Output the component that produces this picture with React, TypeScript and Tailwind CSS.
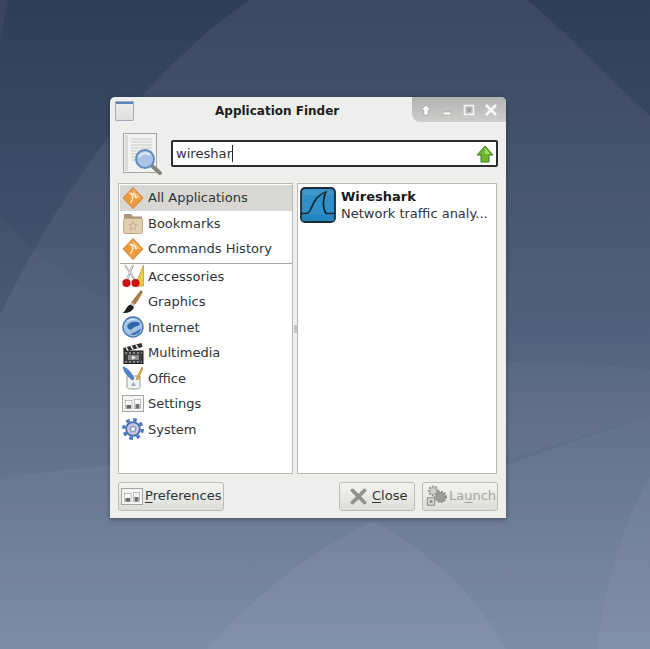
import type { ReactNode } from "react";

function Wallpaper() {
  return (
    <svg className="absolute inset-0" width="650" height="649" viewBox="0 0 650 649">
      <defs>
        <linearGradient id="bg" x1="0" y1="0" x2="0" y2="1">
          <stop offset="0" stopColor="#2f3e57" />
          <stop offset="0.5" stopColor="#465772" />
          <stop offset="1" stopColor="#6f819b" />
        </linearGradient>
      </defs>
      <rect width="650" height="649" fill="url(#bg)" />
      <path d="M250 0C160 60 70 170 0 315V649H650V116C610 80 570 35 527 0Z" fill="#fff" opacity="0.06" />
      <path d="M0 215C30 250 70 280 110 300V470L0 480Z" fill="#fff" opacity="0.02" />
      <path d="M0 0H8L0 40Z" fill="#fff" opacity="0.04" />
      <path d="M0 480C40 472 80 468 120 465H505L650 415V649H0Z" fill="#fff" opacity="0.045" />
      <path d="M500 362C550 362 600 364 650 370V415L505 460Z" fill="#fff" opacity="0.03" />
      <path d="M207 649C250 600 310 550 373 522C430 550 480 600 506 649Z" fill="#fff" opacity="0.05" />
      <path d="M597 649C605 580 625 520 650 477V649Z" fill="#fff" opacity="0.04" />
    </svg>
  );
}

function Diamond() {
  return (
    <svg width="22" height="24" viewBox="0 0 22 24">
      <path d="M11 1.500L21 12L11 22.500L1 12Z" fill="#ee9a3c" stroke="#d0812e" strokeLinejoin="round" />
      <path d="M11 3.500L19 12L11 12Z" fill="#f6bd74" />
      <path d="M8.500 17C11.500 13 11 9 8.500 7.500C12 7.500 14.500 9.500 14 12.500" fill="none" stroke="#fff4e4" strokeWidth="1.300" />
    </svg>
  );
}

function Folder() {
  return (
    <svg width="22" height="24" viewBox="0 0 22 24">
      <path d="M2 3H9L11 5.500H20V10H2Z" fill="#ab9678" />
      <rect x="1.500" y="7.500" width="19" height="15" rx="1" fill="#e2cfb0" stroke="#c0ac8c" />
      <path d="M11 10.500L12.400 13.500H15.200L13 15.500L13.800 18.500L11 16.800L8.200 18.500L9 15.500L6.800 13.500H9.600Z" fill="none" stroke="#c6b193" />
    </svg>
  );
}

function Scissors() {
  return (
    <svg width="22" height="24" viewBox="0 0 22 24">
      <path d="M21.500 1V22H13Z" fill="#edcb45" stroke="#b6972a" strokeWidth="0.700" />
      <path d="M3 1L13 16M11 1L5 16" stroke="#a9acb0" strokeWidth="2.200" fill="none" />
      <path d="M3.500 1L13 16M10.500 1L5 16" stroke="#e9eaea" strokeWidth="0.700" fill="none" />
      <circle cx="4.500" cy="19" r="3" fill="#cc1512" stroke="#cc1512" strokeWidth="2.200" />
      <circle cx="13.500" cy="19" r="3" fill="#cc1512" stroke="#cc1512" strokeWidth="2.200" />
    </svg>
  );
}

function Brush() {
  return (
    <svg width="22" height="24" viewBox="0 0 22 24">
      <path d="M18.500 1C20 0.500 20.500 1.500 20 3L13 14.500L9.500 12.500Z" fill="#b5793b" stroke="#6f4620" strokeWidth="0.500" />
      <path d="M9.500 12L13 14.500L12 17L8.500 14.500Z" fill="#c2c5c8" />
      <path d="M8.500 14.500L12 17C10.500 22 5 23.500 0.500 23C4 21.500 4 16 8.500 14.500Z" fill="#1d1c1a" />
    </svg>
  );
}

function Globe() {
  return (
    <svg width="22" height="22" viewBox="0 0 22 22">
      <circle cx="11" cy="11" r="10" fill="#a4c3e4" stroke="#4378b8" strokeWidth="1.400" />
      <path d="M5 10C8 5 14 5 18 7C17.500 11 13 10 11 12C9 14.500 6 14 5 10Z" fill="#2f66a8" />
      <path d="M8 18.500C12 16 15 15.500 19 12.500C18.500 17 13 20.500 8 18.500Z" fill="#3a72b5" />
      <path d="M4 6C7 2.500 13 2 16 3.500C12 3.500 7 4 4 6Z" fill="#eef4fa" />
    </svg>
  );
}

function Clapper() {
  return (
    <svg width="22" height="22" viewBox="0 0 22 22">
      <rect x="2" y="9" width="19" height="12.500" fill="#3d3e40" stroke="#1b1b1c" />
      <path d="M1 6L19.500 1L20.500 5L2 10Z" fill="#2b2c2e" />
      <path d="M4 5.200L6 8.700M9 4L11 7.500M14 2.700L16 6.200" stroke="#eaeaea" strokeWidth="1.600" />
      <path d="M3 11H20M3 20H20" stroke="#d4d4d4" strokeDasharray="2 2" />
      <path d="M6 13H17V18H6Z" fill="#8a8b8c" />
      <path d="M10 13.500L14 15.500L10 17.500Z" fill="#eee" />
    </svg>
  );
}

function Office() {
  return (
    <svg width="22" height="24" viewBox="0 0 22 24">
      <path d="M5 10H18V21C18 22.500 16 23 11.500 23C7 23 5 22.500 5 21Z" fill="#f2f3f0" stroke="#9a9c98" />
      <path d="M1 1C4 1 10 6 12 13L10 14C7 11 2 7 1 1Z" fill="#4f87c6" stroke="#2c5f9e" strokeWidth="0.500" />
      <path d="M20 1L14 13L16 14L21 2Z" fill="#e2ad3a" stroke="#a67a1e" strokeWidth="0.500" />
      <path d="M9 20L11.500 15.500L14 20Z" fill="#9db2c9" />
    </svg>
  );
}

function SettingsIcon() {
  return (
    <svg className="shrink-0" width="22" height="17" viewBox="0 0 22 17">
      <rect x="0.500" y="0.500" width="21" height="16" fill="#f4f4f2" stroke="#a5a5a3" />
      <rect x="3.500" y="5.500" width="6.500" height="8" fill="#fafafa" stroke="#9a9a9a" strokeWidth="0.600" />
      <rect x="4.500" y="10" width="4.500" height="3.500" fill="#666" />
      <rect x="12.500" y="4.500" width="6" height="9" fill="#f6f6f6" stroke="#9a9a9a" strokeWidth="0.600" />
      <rect x="13.500" y="9" width="4" height="4.500" fill="#707070" />
    </svg>
  );
}

function Gear() {
  return (
    <svg width="22" height="22" viewBox="0 0 22 22">
      <circle cx="11" cy="11" r="9.300" fill="none" stroke="#4a77bb" strokeWidth="3.200" strokeDasharray="3.600 3.700" />
      <circle cx="11" cy="11" r="7" fill="#7e9acb" stroke="#3f6ab0" strokeWidth="1.500" />
      <circle cx="11" cy="11" r="4.500" fill="none" stroke="#c9c4de" strokeWidth="2.500" />
      <circle cx="11" cy="11" r="2" fill="#f4f4f6" />
    </svg>
  );
}

function Wireshark() {
  return (
    <svg className="shrink-0" width="36" height="36" viewBox="0 0 36 36">
      <rect x="1" y="1" width="34" height="34" rx="4" fill="#2f8fc8" stroke="#1c2b34" strokeWidth="1.800" />
      <path d="M1 26.500H7C12 26.500 11 10 26 5C22.500 12 22.500 21 26 26.500H35" fill="none" stroke="#10222e" strokeWidth="1.700" />
      <path d="M2 27.500H34V33C34 33.500 33.500 34 33 34H3C2.500 34 2 33.500 2 33Z" fill="#2484bd" />
      <path d="M3 3H33V8H3Z" fill="#fff" opacity="0.08" />
    </svg>
  );
}

function SearchPage() {
  return (
    <svg className="shrink-0" width="42" height="44" viewBox="0 0 42 44">
      <rect x="1.500" y="1.500" width="33" height="39" fill="#f2f2f0" stroke="#a5a5a3" />
      <path d="M3 3H6V39H3Z" fill="#dcdcda" />
      <path d="M9 7H30M9 10H30M9 13H30M9 16H30M9 19H30M9 22H20M9 25H17M9 28H16" stroke="#c7c7c5" />
      <path d="M29 33L38 41" stroke="#85857f" strokeWidth="4" strokeLinecap="round" />
      <circle cx="23" cy="27" r="9" fill="#a9c4e4" stroke="#5f8cbe" strokeWidth="2" />
      <path d="M17 25C19 21 25 20 28 23" stroke="#e3eef9" strokeWidth="2" fill="none" />
    </svg>
  );
}

function CloseX({ color, size }: { color: string; size: number }) {
  return (
    <svg className="shrink-0" width={size} height={size} viewBox="0 0 17 17">
      <path d="M2.500 2.500L14.500 14.500M14.500 2.500L2.500 14.500" stroke={color} strokeWidth="3.800" strokeLinecap="round" />
    </svg>
  );
}

function Gears() {
  return (
    <svg className="shrink-0" width="22" height="22" viewBox="0 0 24 24" opacity="0.8">
      <circle cx="8" cy="6.500" r="4.500" fill="#c9cac6" stroke="#8b8c88" strokeWidth="3" strokeDasharray="2 1.200" />
      <circle cx="16" cy="13" r="5.500" fill="#8b8c88" stroke="#777" strokeWidth="2.500" strokeDasharray="2 1.200" />
      <rect x="1.500" y="14" width="8" height="8" fill="#d6d6d2" stroke="#6c6d69" />
      <rect x="4" y="16.500" width="3" height="3" fill="#777" />
    </svg>
  );
}

const topItems: [string, ReactNode][] = [
  ["All Applications", <Diamond />],
  ["Bookmarks", <Folder />],
  ["Commands History", <Diamond />],
];

const catItems: [string, ReactNode][] = [
  ["Accessories", <Scissors />],
  ["Graphics", <Brush />],
  ["Internet", <Globe />],
  ["Multimedia", <Clapper />],
  ["Office", <Office />],
  ["Settings", <SettingsIcon />],
  ["System", <Gear />],
];

function Row({ label, icon, active }: { label: string; icon: ReactNode; active?: boolean }) {
  return (
    <div className={`flex h-[25.500px] items-center ${active ? "bg-[#d9d7d3]" : ""}`}>
      <div className="flex w-[28px] shrink-0 pl-[2px]">{icon}</div>
      <span>{label}</span>
    </div>
  );
}

function Button({ children, className }: { children: ReactNode; className: string }) {
  return (
    <div
      className={`flex h-[29px] items-center rounded-[3px] border border-[#bcbcb6] bg-gradient-to-b from-[#f3f3f0] to-[#deded9] pb-[1px] ${className}`}
    >
      {children}
    </div>
  );
}

export default function App() {
  return (
    <div className="relative h-[649px] w-[650px] overflow-hidden bg-[#4d5f7c] pl-[110px] pt-[97px] font-['DejaVu_Sans',sans-serif] text-[13px] text-[#2e3436]">
      <Wallpaper />
      <div className="relative flex h-[421px] w-[396px] flex-col rounded-t-[5px] bg-[#eeeeec] shadow-[0_1px_4px_rgba(20,30,50,0.5)]">
        <div className="relative flex h-[27px] shrink-0 items-center">
          <div className="ml-[5px] h-[20px] w-[19px] rounded-[1px] border border-[#a3abb7] bg-gradient-to-b from-[#eeeeec] to-[#dedfdc] shadow-[inset_0_2px_0_#5d86bd]" />
          <div className="ml-[81px] pt-[1px] text-[12px] font-bold text-[#1c1f20]">Application Finder</div>
          <div className="ml-auto flex h-[25px] w-[94px] items-center justify-between self-start rounded-bl-[8px] rounded-tr-[5px] bg-gradient-to-b from-[#b2b4b1] to-[#cdcecb] pl-[8px] pr-[9px]">
            <svg width="12" height="12" viewBox="0 0 12 12">
              <path d="M6 1L11 6H8.300V11H3.700V6H1Z" fill="#f7f7f5" stroke="#8e908d" strokeWidth="0.500" />
            </svg>
            <svg width="10" height="12" viewBox="0 0 10 12">
              <rect x="1" y="8" width="8" height="3" fill="#f7f7f5" stroke="#8e908d" strokeWidth="0.500" />
            </svg>
            <svg width="12" height="12" viewBox="0 0 12 12">
              <rect x="1.500" y="1.500" width="9" height="9" fill="none" stroke="#f7f7f5" strokeWidth="1.500" />
              <rect x="4" y="4" width="4" height="4" fill="#a3a5a2" />
            </svg>
            <CloseX color="#f7f7f5" size={12} />
          </div>
        </div>

        <div className="flex h-[59px] shrink-0 items-center pl-[12px] pr-[8px]">
          <SearchPage />
          <div className="ml-[7px] flex h-[27px] flex-1 items-center rounded-[2px] border-2 border-[#2b2d2c] bg-white pl-[3px] pr-[2px]">
            <span className="text-[13.100px]">wireshar</span>
            <span className="h-[17px] w-px bg-[#222]" />
            <svg className="ml-auto" width="18" height="18" viewBox="0 0 18 18">
              <path d="M9 1L17 10H13V17H5V10H1Z" fill="#6cb632" stroke="#3f7d1d" strokeLinejoin="round" />
              <path d="M9 3L14 9H9Z" fill="#a4dc6b" />
            </svg>
          </div>
        </div>

        <div className="flex h-[291px] shrink-0 pl-[8px] pr-[9px]">
          <div className="w-[175px] border border-[#b9b9b4] bg-white pl-[1px] pt-[1px]">
            {topItems.map(([label, icon], i) => (
              <Row key={label} label={label} icon={icon} active={i === 0} />
            ))}
            <div className="mt-[1px] h-px bg-[#a9a9a5]" />
            {catItems.map(([label, icon]) => (
              <Row key={label} label={label} icon={icon} />
            ))}
          </div>
          <div className="flex w-[4px] items-center justify-center">
            <div className="h-[8px] w-[3px] bg-[#c6c6c2]" />
          </div>
          <div className="flex-1 border border-[#b9b9b4] bg-white pl-[2px] pt-[3px]">
            <div className="flex items-center">
              <Wireshark />
              <div className="ml-[5px] whitespace-nowrap leading-[17px]">
                <div className="font-bold text-[#16191a]">Wireshark</div>
                <div>Network traffic analy...</div>
              </div>
            </div>
          </div>
        </div>

        <div className="flex flex-1 items-start pl-[8px] pr-[8px] pt-[8px]">
          <Button className="w-[106px] pl-[2px]">
            <SettingsIcon />
            <span className="ml-[2px]">
              <span className="underline underline-offset-2">P</span>references
            </span>
          </Button>
          <Button className="ml-auto w-[76px] pl-[10px]">
            <CloseX color="#8f918c" size={17} />
            <span className="ml-[5px]">
              <span className="underline underline-offset-2">C</span>lose
            </span>
          </Button>
          <Button className="ml-[7px] w-[76px] pl-[3px] text-[#a4a5a1]">
            <Gears />
            <span className="ml-[1px]">
              La<span className="underline underline-offset-2">u</span>nch
            </span>
          </Button>
        </div>
      </div>
    </div>
  );
}
